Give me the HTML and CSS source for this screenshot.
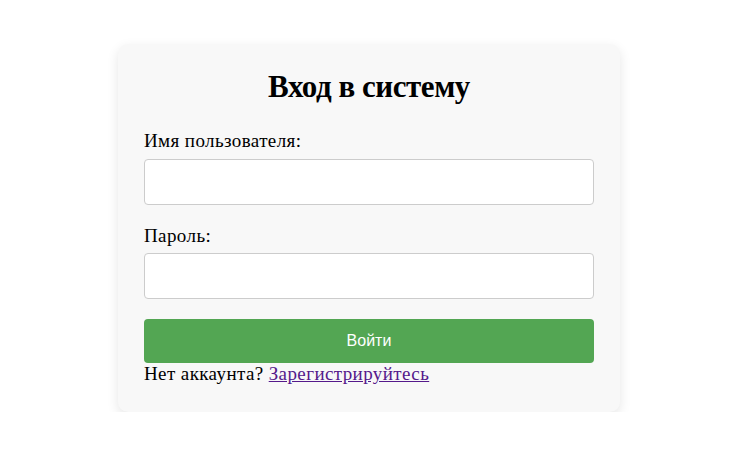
FILE: index.html
```html
<!DOCTYPE html>
<html lang="ru">
<head>
    <meta charset="UTF-8">
    <meta name="viewport" content="width=device-width, initial-scale=1.0">
    <title>Вход в систему</title>
    <link rel="stylesheet" href="styles.css">
</head>
<body>

    <!-- Login Form -->
    <div class="login-container">
        <h1>Вход в систему</h1>
        <form id="login-form">
            <label for="username">Имя пользователя:</label>
            <input type="text" id="username" name="username" required>

            <label for="password">Пароль:</label>
            <input type="password" id="password" name="password" required>

            <button type="submit">Войти</button>
        </form>
        <p class="register">Нет аккаунта? <a href="#register">Зарегистрируйтесь</a></p>
    </div>

</body>
</html>
```

FILE: styles.css
```css
body {
    font-family: 'Liberation Serif', 'Times New Roman', serif;
    font-size: 19px;
    margin: 0;
    padding: 44px 9px 0 0;
    background-color: #fff;
    color: #000;
    display: flex;
    justify-content: center;
}
.login-container {
    width: 450px;
    padding: 25px 26px 27px;
    background-color: #f8f8f8;
    border-radius: 10px;
    box-shadow: 0 4px 12px rgba(0, 0, 0, 0.1);
}
.login-container h1 {
    margin: 0 0 25px;
    font-size: 31px;
    letter-spacing: -0.45px;
    text-align: center;
}
label {
    display: block;
    margin-bottom: 6.5px;
    letter-spacing: 0.4px;
}
input[type="text"], input[type="password"] {
    display: block;
    box-sizing: border-box;
    width: 100%;
    height: 46px;
    padding: 10px;
    margin: 0 0 20px;
    border: 1px solid #ccc;
    border-radius: 4px;
    background: #fff;
    font-size: 16px;
}
button {
    display: block;
    width: 100%;
    height: 44px;
    padding: 0;
    background-color: #53a653;
    color: white;
    border: none;
    border-radius: 4px;
    font-family: 'Liberation Sans', Arial, sans-serif;
    font-size: 16px;
    cursor: pointer;
}
.register {
    margin: 0;
    letter-spacing: 0.4px;
}
.register a {
    color: #551a8b;
}
```
